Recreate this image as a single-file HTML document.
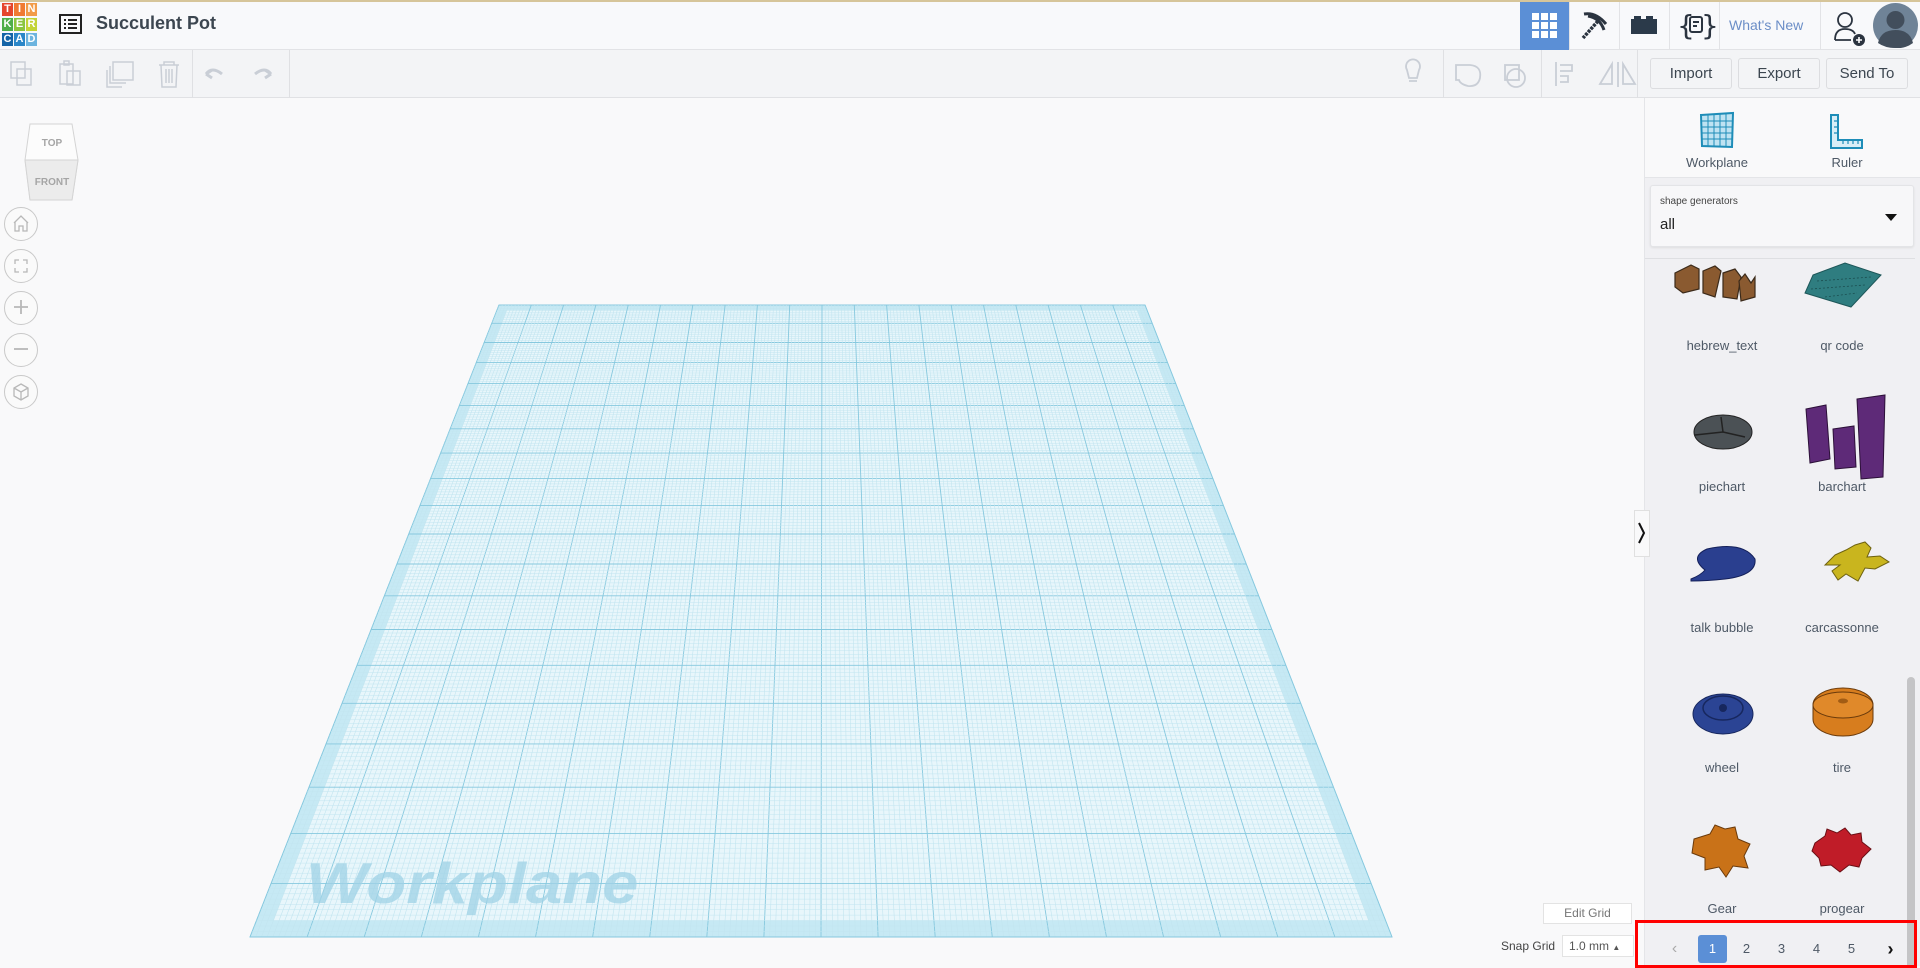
<!DOCTYPE html>
<html><head><meta charset="utf-8">
<style>
*{margin:0;padding:0;box-sizing:border-box}
body{width:1920px;height:966px;overflow:hidden;background:#f9f9fa;font-family:"Liberation Sans",sans-serif;position:relative}
.abs{position:absolute}
#top{left:0;top:0;width:1920px;height:50px;background:#f8f9fb;border-top:2px solid #d6c59a;border-bottom:1px solid #e2e3e6}
#tb{left:0;top:50px;width:1920px;height:48px;background:#f3f4f6;border-bottom:1px solid #e0e1e4}
.lg{position:absolute;width:11px;height:13px;color:#fff;font-size:11px;font-weight:bold;text-align:center;line-height:13px}
.sep{position:absolute;top:50px;width:1px;height:48px;background:#dfe0e3}
.btn{position:absolute;top:58px;height:31px;border:1px solid #dcdde0;border-radius:3px;background:#f3f4f6;color:#3c4650;font-size:15px;text-align:center;line-height:29px}
.tbtn{position:absolute;top:2px;height:48px;border-left:1px solid #e2e3e6}
#panel{left:1644px;top:98px;width:276px;height:868px;background:#f0f0f3;border-left:1px solid #e4e5e8}
.lbl{position:absolute;width:120px;text-align:center;font-size:13px;color:#4e5966}
.nav{position:absolute;left:4px;width:34px;height:34px;border:1px solid #c9c9c9;border-radius:50%;background:#fafafa}
.pg{position:absolute;top:935px;width:29px;height:28px;text-align:center;line-height:28px;font-size:13px;color:#4e5966}
</style></head><body>
<div id="top" class="abs"></div>
<div class="lg" style="left:2px;top:3px;background:#e5462d">T</div>
<div class="lg" style="left:14px;top:3px;background:#f07a32">I</div>
<div class="lg" style="left:26px;top:3px;background:#f29b48">N</div>
<div class="lg" style="left:2px;top:18px;background:#4fae4a">K</div>
<div class="lg" style="left:14px;top:18px;background:#8cc53f">E</div>
<div class="lg" style="left:26px;top:18px;background:#c3d436">R</div>
<div class="lg" style="left:2px;top:33px;background:#1565a8">C</div>
<div class="lg" style="left:14px;top:33px;background:#2a86c8">A</div>
<div class="lg" style="left:26px;top:33px;background:#6cb4df">D</div>
<svg class="abs" style="left:59px;top:14px" width="23" height="20" viewBox="0 0 23 20"><rect x="1" y="1" width="21" height="18" fill="none" stroke="#222" stroke-width="2"/><g fill="#222"><rect x="5" y="5" width="2" height="2"/><rect x="9" y="5" width="9" height="2"/><rect x="5" y="9" width="2" height="2"/><rect x="9" y="9" width="9" height="2"/><rect x="5" y="13" width="2" height="2"/><rect x="9" y="13" width="9" height="2"/></g></svg>
<div class="abs" style="left:96px;top:13px;font-size:18px;font-weight:bold;color:#3c4650">Succulent Pot</div>
<div class="tbtn" style="left:1520px;width:49px;background:#5b8fd6;border:none"></div>
<svg class="abs" style="left:1532px;top:13px" width="26" height="26"><g fill="#fff"><rect x="0" y="0" width="7" height="7"/><rect x="9" y="0" width="7" height="7"/><rect x="18" y="0" width="7" height="7"/><rect x="0" y="9" width="7" height="7"/><rect x="9" y="9" width="7" height="7"/><rect x="18" y="9" width="7" height="7"/><rect x="0" y="18" width="7" height="7"/><rect x="9" y="18" width="7" height="7"/><rect x="18" y="18" width="7" height="7"/></g></svg>
<div class="tbtn" style="left:1569px;width:50px"></div>
<svg class="abs" style="left:1578px;top:10px" width="32" height="32"><path d="M6 4 Q18 2 28 14 M10 6 Q22 8 26 20" stroke="#2b3440" stroke-width="3" fill="none"/><path d="M20 11 L5 28" stroke="#2b3440" stroke-width="3.5" stroke-dasharray="3 1"/></svg>
<div class="tbtn" style="left:1619px;width:50px"></div>
<svg class="abs" style="left:1630px;top:16px" width="28" height="20"><rect x="1" y="3" width="26" height="15" fill="#2b3a4a"/><rect x="4" y="0" width="7" height="4" fill="#2b3a4a"/><rect x="16" y="0" width="7" height="4" fill="#2b3a4a"/></svg>
<div class="tbtn" style="left:1669px;width:50px"></div>
<div class="abs" style="left:1677px;top:9px;font-size:28px;color:#2b3440;font-family:'DejaVu Sans',sans-serif">{</div>
<div class="abs" style="left:1701px;top:9px;font-size:28px;color:#2b3440;font-family:'DejaVu Sans',sans-serif">}</div>
<svg class="abs" style="left:1689px;top:16px" width="14" height="18"><rect x="1" y="1" width="12" height="15" rx="2" fill="none" stroke="#2b3440" stroke-width="2"/><rect x="4" y="5" width="6" height="2" fill="#2b3440"/><rect x="4" y="9" width="4" height="2" fill="#2b3440"/></svg>
<div class="tbtn" style="left:1719px;width:101px"></div>
<div class="abs" style="left:1729px;top:17px;font-size:14px;color:#6b8ec7">What's New</div>
<div class="tbtn" style="left:1820px;width:51px"></div>
<svg class="abs" style="left:1833px;top:10px" width="34" height="36"><circle cx="12" cy="10" r="7" fill="none" stroke="#2b3440" stroke-width="1.8"/><path d="M2 30 Q2 19 12 19 Q20 19 22 24 M2 30 H18" fill="none" stroke="#2b3440" stroke-width="1.8"/><circle cx="26" cy="30" r="6" fill="#2b3440"/><path d="M26 27 V33 M23 30 H29" stroke="#fff" stroke-width="1.6"/></svg>
<svg class="abs" style="left:1873px;top:3px" width="45" height="45"><circle cx="22.5" cy="22.5" r="22.5" fill="#6f8397"/><circle cx="22.5" cy="17" r="9" fill="#424e5c"/><path d="M5 40 Q8 27 22.5 27 Q37 27 40 40 Q32 46 22.5 45 Q12 45 5 40Z" fill="#424e5c"/></svg>
<div id="tb" class="abs"></div>
<svg class="abs" style="left:0;top:50px" width="300" height="48" fill="none" stroke="#c9ced6" stroke-width="1.5">
<rect x="11" y="12" width="14" height="16"/><rect x="17" y="19" width="14" height="16"/>
<rect x="60" y="14" width="13" height="20"/><rect x="64" y="11" width="5" height="4"/><rect x="67" y="21" width="13" height="14"/>
<rect x="113" y="12" width="20" height="18"/><path d="M110 16 V33 H126 M107 20 V37 H122"/>
<path d="M159 15 H179 M164 15 V12 H174 V15 M161 15 L162 37 H176 L177 15 M166 19 V33 M169 19 V33 M172 19 V33"/>
<path d="M222 24 Q212 16 206 24 M206 24 L212 20 M206 24 L212 28" stroke-width="3"/>
<path d="M255 24 Q265 16 271 24 M271 24 L265 20 M271 24 L265 28" stroke-width="3"/>
</svg>
<div class="sep" style="left:192px"></div><div class="sep" style="left:289px"></div>
<svg class="abs" style="left:1400px;top:50px" width="245" height="48" fill="none" stroke="#c9ced6" stroke-width="1.8">
<path d="M7 20 A7 7 0 1 1 19 20 L17 28 H9 Z M9 31 H17"/>
<path d="M56 15 H70 Q82 16 80 28 Q78 37 68 36 Q60 34 59 30 H56 Z"/>
<rect x="105" y="15" width="14" height="15"/><circle cx="116" cy="28" r="9"/>
<path d="M156 12 V36 M160 15 H172 V21 H160 M160 26 H168 V32 H160"/>
<path d="M212 34 L200 34 L212 14 Z M218 12 V37 M223 14 L235 34 H223 Z"/>
</svg>
<div class="sep" style="left:1443px"></div><div class="sep" style="left:1541px"></div><div class="sep" style="left:1637px"></div>
<div class="btn" style="left:1650px;width:82px">Import</div>
<div class="btn" style="left:1738px;width:82px">Export</div>
<div class="btn" style="left:1826px;width:82px">Send To</div>
<svg class="abs" style="left:24px;top:122px" width="60" height="80"><path d="M6 2 H48 L54 38 L48 78 H6 L1 38 Z" fill="#fcfcfc" stroke="#d4d4d4"/><path d="M1 38 H54 L48 78 H6 Z" fill="#ececec" stroke="#d4d4d4"/><text x="28" y="24" font-size="10" font-weight="bold" fill="#a5a5a5" text-anchor="middle" font-family="Liberation Sans">TOP</text><text x="28" y="63" font-size="10" font-weight="bold" fill="#a5a5a5" text-anchor="middle" font-family="Liberation Sans">FRONT</text></svg>
<div class="nav" style="top:207px"></div><div class="nav" style="top:249px"></div><div class="nav" style="top:291px"></div><div class="nav" style="top:333px"></div><div class="nav" style="top:375px"></div>
<svg class="abs" style="left:4px;top:207px" width="34" height="210" fill="none" stroke="#b8b8b8" stroke-width="1.3">
<path d="M10 16 L17 9 L24 16 M11 15 V24 H15 V19 H19 V24 H23 V15"/>
<path d="M11 57 V53 H15 M19 53 H23 V57 M23 61 V65 H19 M15 65 H11 V61"/>
<path d="M17 93 V107 M10 100 H24" stroke-width="1.8"/>
<path d="M10 142 H24" stroke-width="1.8"/>
<path d="M17 177 L24 181 V189 L17 193 L10 189 V181 Z M10 181 L17 185 L24 181 M17 185 V193"/>
</svg>
<svg id="wp" class="abs" style="left:0;top:0" width="1640" height="966">
<polygon points="499,305 1145,305 1392,937 250,937" fill="#e8f6fb" stroke="#8fd0e6"/>
<g id="lines"></g>
<text x="0" y="0" font-family="Liberation Sans" font-weight="bold" font-style="italic" font-size="64" fill="#9fd2e6" fill-opacity="0.75" transform="translate(306,903) scale(1.02,0.9)">Workplane</text>
</svg>
<script>
(function(){var g=document.getElementById('lines'),s='';
var x0t=499,x1t=1145,x0b=250,x1b=1392,yt=305,yb=937;
function Y(t){return -526.6+1463.6/(1.76-0.76*t);}
function X(u,t){var y=Y(t);var f=(y-yt)/(yb-yt);var l=x0t+(x0b-x0t)*f,r=x1t+(x1b-x1t)*f;return l+(r-l)*u;}
var b=3/200;
s+='<path d="M'+X(0,0)+' '+yt+' L'+X(1,0)+' '+yt+' L'+X(1,1)+' '+yb+' L'+X(0,1)+' '+yb+' Z M'+X(b,b)+' '+Y(b)+' L'+X(1-b,b)+' '+Y(b)+' L'+X(1-b,1-b)+' '+Y(1-b)+' L'+X(b,1-b)+' '+Y(1-b)+' Z" fill="#c6e9f4" fill-rule="evenodd"/>';
for(var i=0;i<=200;i++){var u=i/200,maj=i%10==0;
s+='<line x1="'+X(u,0).toFixed(1)+'" y1="'+yt+'" x2="'+X(u,1).toFixed(1)+'" y2="'+yb+'" stroke="'+(maj?'#86c8de':'#c2e5f0')+'" stroke-width="'+(maj?0.9:0.6)+'"/>';
var y=Y(u).toFixed(1);
s+='<line x1="'+X(0,u).toFixed(1)+'" y1="'+y+'" x2="'+X(1,u).toFixed(1)+'" y2="'+y+'" stroke="'+(maj?'#86c8de':'#c2e5f0')+'" stroke-width="'+(maj?0.9:0.5)+'"/>';}
g.innerHTML=s;})();
</script>
<div class="abs" style="left:1543px;top:903px;width:89px;height:21px;border:1px solid #e3e3e3;background:#fff;font-size:12px;color:#777;text-align:center;line-height:19px">Edit Grid</div>
<div class="abs" style="left:1501px;top:939px;font-size:12px;color:#444">Snap Grid</div>
<div class="abs" style="left:1562px;top:935px;width:72px;height:22px;border:1px solid #e3e3e3;background:#fff;font-size:12px;color:#555;line-height:20px;padding-left:6px">1.0 mm <span style="font-size:8px">▲</span></div>
<div id="panel" class="abs"></div>
<div class="abs" style="left:1645px;top:98px;width:275px;height:80px;background:#f9f9fa;border-bottom:1px solid #e4e5e8"></div>
<svg class="abs" style="left:1699px;top:111px" width="36" height="38"><path d="M2 4 L34 2 L33 36 L3 35 Z" fill="#bfe3f2" stroke="#1e8db8" stroke-width="2"/><g stroke="#1e8db8" stroke-width="1"><path d="M9 4 V35 M15 3 V35 M21 3 V36 M27 3 V36 M2 10 H34 M2 16 H34 M3 22 H33 M3 28 H33"/></g></svg>
<svg class="abs" style="left:1829px;top:113px" width="36" height="36"><path d="M2 2 H9 V27 H33 V35 H2 Z" fill="#d8eef7" stroke="#1e8db8" stroke-width="2"/><path d="M14 27 V31 M19 27 V31 M24 27 V31 M29 27 V31 M9 8 H5 M9 14 H5 M9 20 H5" stroke="#1e8db8" stroke-width="1.2"/></svg>
<div class="lbl" style="left:1657px;top:155px">Workplane</div>
<div class="lbl" style="left:1787px;top:155px">Ruler</div>
<div class="abs" style="left:1650px;top:185px;width:264px;height:62px;background:#f7f7f9;border:1px solid #e3e4e7;border-radius:3px;box-shadow:0 1px 2px rgba(0,0,0,.08)"></div>
<div class="abs" style="left:1660px;top:196px;font-size:10px;color:#444">shape generators</div>
<div class="abs" style="left:1660px;top:216px;font-size:15px;color:#222">all</div>
<svg class="abs" style="left:1885px;top:214px" width="12" height="8"><path d="M0 0 H12 L6 7 Z" fill="#111"/></svg>
<div class="abs" style="left:1645px;top:258px;width:270px;height:1px;background:#dedfe2"></div>
<svg class="abs" style="left:1645px;top:259px" width="262" height="660">
<g stroke="#3b2a1a" stroke-width="1.2" fill="#8a5a30">
<path d="M30 14 L46 6 L54 10 L54 30 L38 34 L30 28Z"/><path d="M58 12 L70 7 L76 12 L70 38 L58 34Z"/><path d="M78 14 L90 10 L96 18 L92 40 L78 38Z"/><path d="M94 22 L100 15 L106 24 L110 18 V38 L96 42Z"/>
</g>
<path d="M168 16 L200 4 L236 16 L206 48 L160 34Z" fill="#2f7d80" stroke="#1e5759"/>
<g fill="none" stroke="#1b4e50" stroke-width="0.8" stroke-dasharray="2 2"><path d="M172 22 L226 18 M166 30 L220 26 M180 38 L212 34"/></g>
<ellipse cx="78" cy="173" rx="29" ry="17" fill="#4b5155" stroke="#222"/>
<path d="M78 173 L76 158 M78 173 L50 176 M78 173 L100 178" stroke="#222" stroke-width="1.5"/>
<path d="M161 150 L181 146 L185 200 L165 204Z" fill="#5e2a78" stroke="#2c1038"/>
<path d="M188 170 L209 167 L211 208 L190 210Z" fill="#5e2a78" stroke="#2c1038"/>
<path d="M212 140 L240 136 L238 218 L216 220Z" fill="#5e2a78" stroke="#2c1038"/>
<path d="M46 320 Q56 316 60 311 Q44 298 62 290 Q98 282 110 300 Q112 316 80 320 Q62 322 46 322Z" fill="#2a3f8f" stroke="#14205a"/>
<path d="M190 296 L201 291 L210 286 L220 283 L226 289 L222 298 L235 297 L244 303 L230 310 L220 309 L213 322 L201 315 L193 321 L187 312 L195 306 L180 306Z" fill="#c9b51e" stroke="#6e6210"/>
<ellipse cx="78" cy="455" rx="30" ry="20" fill="#2b4494" stroke="#17275e"/>
<ellipse cx="78" cy="449" rx="20" ry="12" fill="none" stroke="#17275e" stroke-width="1.5"/>
<circle cx="78" cy="449" r="4" fill="#17275e"/>
<path d="M168 446 A30 17 0 0 1 228 446 V460 A30 17 0 0 1 168 460Z" fill="#d77d1e" stroke="#6a3a0b"/>
<ellipse cx="198" cy="446" rx="30" ry="13" fill="#e0892a" stroke="#6a3a0b"/>
<ellipse cx="198" cy="442" rx="5" ry="2.5" fill="#a25c14"/>
<path d="M49 580 L65 575 L70 566 L80 570 L90 568 L93 580 L105 585 L99 597 L103 609 L88 607 L81 618 L74 608 L60 611 L60 599 L47 594 Z" fill="#c97218" stroke="#6a3a0b"/>
<path d="M170 584 L180 577 L182 570 L192 574 L200 569 L206 576 L216 574 L217 583 L226 590 L217 599 L214 608 L204 606 L195 613 L186 606 L176 607 L174 599 L167 592 Z" fill="#c01c28" stroke="#6a0e14"/>
</svg>
<div class="lbl" style="left:1662px;top:338px">hebrew_text</div>
<div class="lbl" style="left:1782px;top:338px">qr code</div>
<div class="lbl" style="left:1662px;top:479px">piechart</div>
<div class="lbl" style="left:1782px;top:479px">barchart</div>
<div class="lbl" style="left:1662px;top:620px">talk bubble</div>
<div class="lbl" style="left:1782px;top:620px">carcassonne</div>
<div class="lbl" style="left:1662px;top:760px">wheel</div>
<div class="lbl" style="left:1782px;top:760px">tire</div>
<div class="lbl" style="left:1662px;top:901px">Gear</div>
<div class="lbl" style="left:1782px;top:901px">progear</div>
<div class="abs" style="left:1907px;top:677px;width:8px;height:289px;background:#c4c4c6;border-radius:4px 4px 0 0"></div>
<div class="abs" style="left:1634px;top:510px;width:16px;height:47px;background:#f9f9fa;border:1px solid #e0e0e0"></div>
<svg class="abs" style="left:1638px;top:522px" width="8" height="22"><path d="M1 1 L6 11 L1 21" fill="none" stroke="#111" stroke-width="2"/></svg>
<div class="abs" style="left:1635px;top:920px;width:282px;height:48px;border:3px solid #ff0000"></div>
<div class="pg" style="left:1660px;color:#aaa;font-size:16px">‹</div>
<div class="pg" style="left:1698px;background:#5b8fd6;color:#fff;border-radius:3px">1</div>
<div class="pg" style="left:1732px">2</div>
<div class="pg" style="left:1767px">3</div>
<div class="pg" style="left:1802px">4</div>
<div class="pg" style="left:1837px">5</div>
<div class="pg" style="left:1876px;color:#111;font-size:18px;font-weight:bold">›</div>
</body></html>
